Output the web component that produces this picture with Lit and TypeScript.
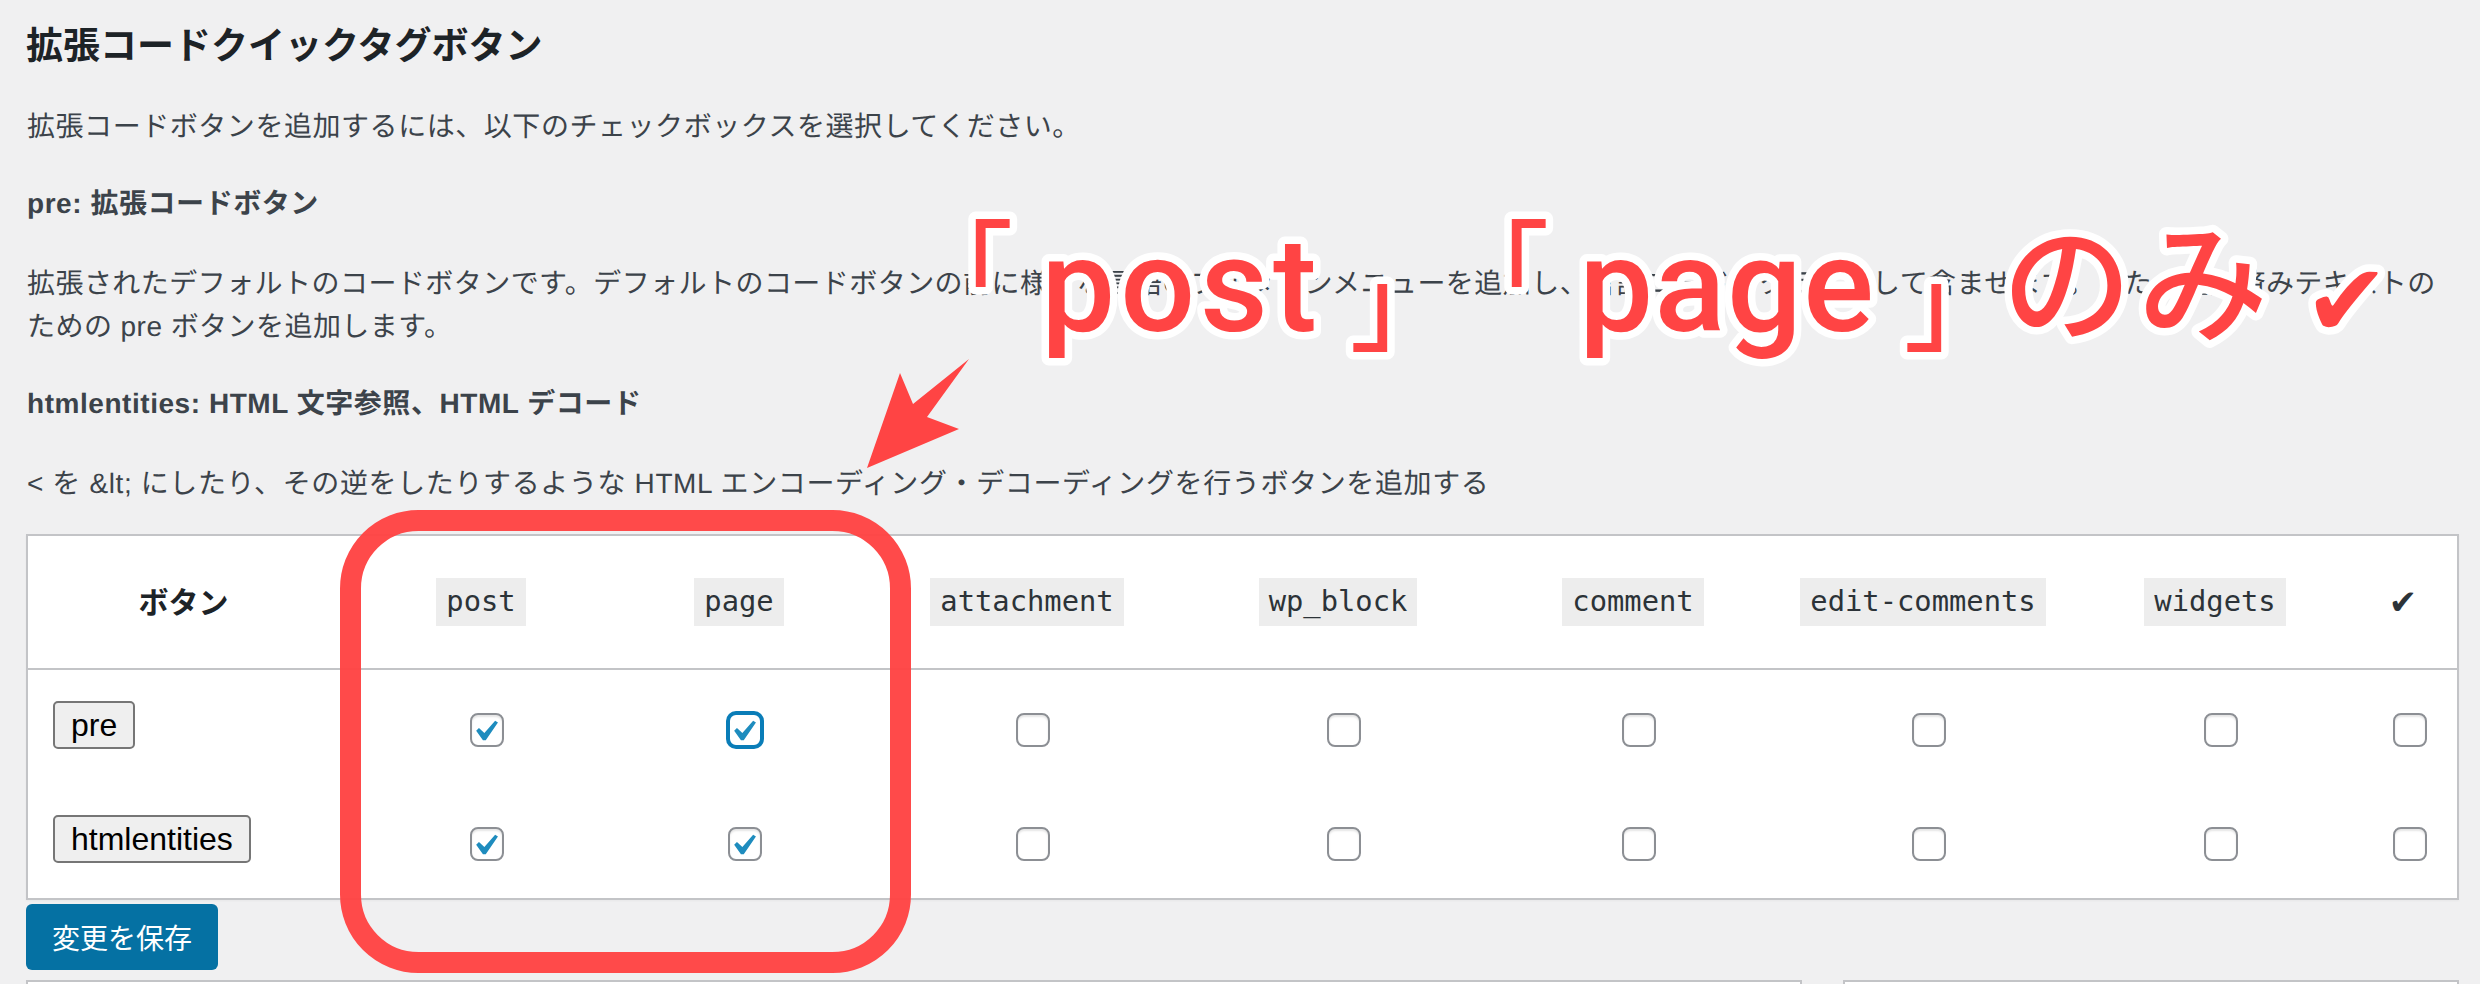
import { LitElement, html, css, svg } from "lit";
import { customElement } from "lit/decorators.js";

const COLUMNS = ["post", "page", "attachment", "wp_block", "comment", "edit-comments", "widgets"];

const ROWS = [
  { label: "pre", checked: [true, true], focused: 1 },
  { label: "htmlentities", checked: [true, true], focused: -1 },
];

const CHECK_PATH = "M14.83 4.89l1.34.94-5.81 8.38H9.02L5.78 9.67l1.34-1.25 2.57 2.4z";

@customElement("app-root")
export class AppRoot extends LitElement {
  static styles = css`
    :host {
      display: block;
      position: relative;
      width: 2480px;
      height: 984px;
      overflow: hidden;
      background: #f0f0f1;
      color: #3c434a;
      font-family: "Liberation Sans", "Noto Sans CJK JP", sans-serif;
      font-size: 28px;
      line-height: 43px;
    }

    .page {
      display: flex;
      flex-direction: column;
      padding: 26px 21px 0 26px;
    }

    h2 {
      margin: 0;
      color: #1d2327;
      font-size: 37px;
      line-height: 42px;
      font-weight: 700;
    }

    p {
      margin: 37px 0 0;
      padding-left: 1px;
      text-rendering: geometricPrecision;
      letter-spacing: 0.55px;
    }

    p.bold {
      margin-top: 34px;
      font-weight: 700;
    }

    p.long {
      letter-spacing: 0.45px;
    }

    .last {
      margin-bottom: 29px;
      letter-spacing: 0.62px;
    }

    table {
      width: 2433px;
      table-layout: fixed;
      border-collapse: separate;
      border-spacing: 0;
      background: #fff;
      border: 2px solid #c3c4c7;
      box-shadow: 0 1px 2px rgba(0, 0, 0, 0.04);
    }

    th {
      height: 132px;
      padding: 0;
      border-bottom: 2px solid #c3c4c7;
      text-align: center;
      font-size: 30px;
      font-weight: 700;
      color: #1d2327;
    }

    th:last-child {
      padding-right: 24px;
      font-family: "DejaVu Sans", sans-serif;
      font-size: 34px;
      color: #2c3338;
    }

    td {
      height: 114px;
      padding: 0;
      text-align: center;
    }

    td:first-child {
      padding-left: 25px;
      text-align: left;
    }

    td:last-child {
      padding-right: 22px;
    }

    code {
      display: inline-block;
      height: 48px;
      padding: 0 10px;
      background: #ededed;
      font-family: "DejaVu Sans Mono", monospace;
      font-size: 28.8px;
      font-weight: 400;
      line-height: 46px;
      color: #2c3338;
      vertical-align: middle;
    }

    .label {
      display: inline-block;
      height: 48px;
      margin-bottom: 4px;
      padding: 0 16px;
      box-sizing: border-box;
      background: #efefef;
      border: 2px solid #767676;
      border-radius: 5px;
      color: #000;
      font-family: inherit;
      font-size: 32px;
      line-height: 44px;
      vertical-align: middle;
    }

    .cb {
      display: inline-block;
      box-sizing: border-box;
      width: 34px;
      height: 34px;
      margin: 2px 0 0 12px;
      background: #fff;
      border: 2px solid #8c8f94;
      border-radius: 8px;
      box-shadow: inset 0 2px 2px rgba(0, 0, 0, 0.1);
      vertical-align: middle;
    }

    .cb.focused {
      border-color: #0a7db8;
      box-shadow: 0 0 0 2px #0a7db8;
    }

    .cb svg {
      display: block;
      width: 30px;
      height: 30px;
      fill: #1e8cbe;
    }

    .save {
      align-self: flex-start;
      width: 192px;
      height: 66px;
      margin-top: 4px;
      padding: 0;
      background: #0571a3;
      border: 0;
      border-radius: 6px;
      color: #fff;
      font-family: inherit;
      font-size: 28px;
    }

    .boxes {
      display: flex;
      gap: 41px;
      margin-top: 10px;
    }

    .box {
      height: 40px;
      background: #fff;
      border: 2px solid #c3c4c7;
      box-sizing: border-box;
    }

    .box.main {
      width: 1776px;
    }

    .box.side {
      width: 616px;
    }

    .notes {
      position: absolute;
      top: 0;
      left: 0;
      pointer-events: none;
    }

    .notes text {
      fill: #ff4444;
      stroke: #fff;
      stroke-width: 15px;
      stroke-linejoin: round;
      paint-order: stroke fill;
    }

    .notes .latin {
      font-family: Roboto, sans-serif;
      font-size: 132px;
      font-weight: 500;
    }

    .notes .jp {
      font-family: "Noto Sans CJK JP", sans-serif;
      font-size: 105px;
      font-weight: 500;
    }

    .notes .kana {
      font-size: 130px;
    }

    .notes .tick {
      font-family: "DejaVu Sans", sans-serif;
      font-size: 102px;
    }
  `;

  private checkbox(checked: boolean, focused: boolean) {
    return html`<span
      class="cb ${focused ? "focused" : ""}"
      role="checkbox"
      aria-checked="${checked}"
    >
      ${checked
        ? html`<svg viewBox="3.8 2.2 14.3 14.3"><path d="${CHECK_PATH}"></path></svg>`
        : ""}
    </span>`;
  }

  private annotation() {
    return html`<svg class="notes" width="2480" height="984" viewBox="0 0 2480 984">
      ${svg`
        <rect x="350.5" y="520.5" width="550" height="442" rx="68" ry="68"
          fill="none" stroke="#ff4444" stroke-opacity="0.97" stroke-width="21"></rect>
        <polygon points="867,468 900,373 913,404 969,359 927,417 959,429" fill="#ff4444"></polygon>
        <text class="jp" x="908" y="308">「</text>
        <text class="latin" x="1041" y="331" textLength="276">post</text>
        <text class="jp" x="1350" y="342">」</text>
        <text class="jp" x="1444" y="308">「</text>
        <text class="latin" x="1579" y="331" textLength="295">page</text>
        <text class="jp" x="1904" y="342">」</text>
        <text class="jp kana" x="2002" y="331">の</text>
        <text class="jp kana" x="2138" y="331">み</text>
        <text class="tick" x="2304" y="336">✔</text>
      `}
    </svg>`;
  }

  render() {
    return html`
      <div class="page">
        <h2>拡張コードクイックタグボタン</h2>
        <p>拡張コードボタンを追加するには、以下のチェックボックスを選択してください。</p>
        <p class="bold">pre: 拡張コードボタン</p>
        <p class="long">
          拡張されたデフォルトのコードボタンです。デフォルトのコードボタンの前に様々な言語のプルダウンメニューを追加し、言語コードをクラスとして含ませます。また、整形済みテキストのための
          pre ボタンを追加します。
        </p>
        <p class="bold">htmlentities: HTML 文字参照、HTML デコード</p>
        <p class="last">
          &lt; を &amp;lt; にしたり、その逆をしたりするような HTML
          エンコーディング・デコーディングを行うボタンを追加する
        </p>
        <table>
          <colgroup>
            ${[311, 284, 232, 344, 278, 312, 268, 316, 84].map(
              (w) => html`<col style="width:${w}px" />`
            )}
          </colgroup>
          <thead>
            <tr>
              <th>ボタン</th>
              ${COLUMNS.map((c) => html`<th><code>${c}</code></th>`)}
              <th>✔</th>
            </tr>
          </thead>
          <tbody>
            ${ROWS.map(
              (row) => html`
                <tr>
                  <td><button class="label">${row.label}</button></td>
                  ${[...COLUMNS, "all"].map(
                    (_, i) =>
                      html`<td>${this.checkbox(!!row.checked[i], row.focused === i)}</td>`
                  )}
                </tr>
              `
            )}
          </tbody>
        </table>
        <button class="save">変更を保存</button>
        <div class="boxes">
          <div class="box main"></div>
          <div class="box side"></div>
        </div>
      </div>
      ${this.annotation()}
    `;
  }
}
